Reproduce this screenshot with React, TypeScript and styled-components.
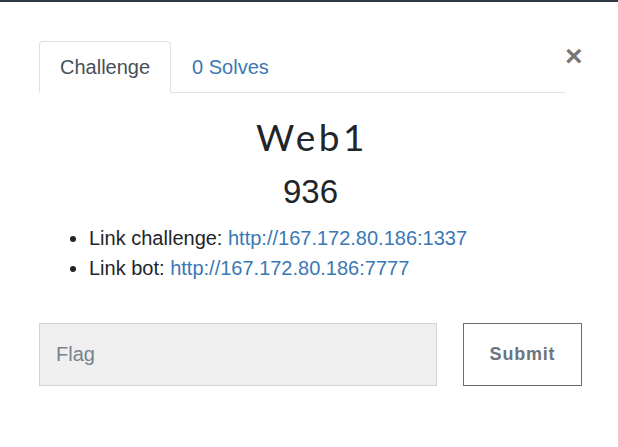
import React from "react";
import styled, { createGlobalStyle } from "styled-components";

const Global = createGlobalStyle`
  html, body { margin: 0; padding: 0; background: #fff; }
  body { font-family: "Liberation Sans", Arial, sans-serif; color: #212529; }
  * { box-sizing: border-box; }
`;

const TopBar = styled.div`
  height: 2px;
  background: #2f3a44;
`;

const Modal = styled.div`
  padding: 39px 36px 0 39px;
`;

const HeaderRow = styled.div`
  display: flex;
  justify-content: space-between;
  align-items: flex-start;
`;

const Tabs = styled.ul`
  display: flex;
  flex-shrink: 0;
  width: 526px;
  margin: 0;
  padding: 0;
  list-style: none;
  border-bottom: 1px solid #dee2e6;
`;

const Tab = styled.li<{ $active?: boolean }>`
  margin-bottom: -1px;
  padding: 10px 20px;
  font-size: 20px;
  line-height: 30px;
  border: 1px solid ${(p) => (p.$active ? "#dee2e6" : "transparent")};
  border-bottom-color: ${(p) => (p.$active ? "#fff" : "transparent")};
  border-radius: 4px 4px 0 0;
  background: ${(p) => (p.$active ? "#fff" : "transparent")};
  color: ${(p) => (p.$active ? "#495057" : "#3b78b3")};
`;

const Close = styled.button`
  border: 0;
  background: none;
  padding: 0;
  margin: 2px 1px 0 0;
  font-family: "Liberation Sans", Arial, sans-serif;
  font-size: 30px;
  font-weight: 700;
  line-height: 26px;
  color: #777;
`;

const Title = styled.h2`
  margin: 20px 0 0;
  padding-left: 3px;
  text-align: center;
  font-family: Lato, "Open Sans", sans-serif;
  font-weight: 400;
  font-size: 37px;
  letter-spacing: 3.5px;
  line-height: 48px;
  color: #212529;
`;

const Value = styled.h3`
  margin: 11px 0 0;
  text-align: center;
  font-weight: 400;
  font-size: 33px;
  line-height: 40px;
  color: #212529;
`;

const Links = styled.ul`
  margin: 11px 0 0;
  padding-left: 50px;
  font-size: 20px;
  line-height: 30px;
`;

const Link = styled.a`
  color: #3b78b3;
  text-decoration: none;
`;

const FormRow = styled.form`
  display: flex;
  gap: 26px;
  margin-top: 40px;
`;

const FlagInput = styled.input`
  width: 398px;
  height: 63px;
  padding: 0 16px;
  border: 1px solid #d4d4d4;
  background: #efefef;
  font-family: "Liberation Sans", Arial, sans-serif;
  font-size: 20px;
  color: #495057;
  outline: none;
  &::placeholder { color: #78828c; }
`;

const Submit = styled.button`
  width: 119px;
  height: 63px;
  border: 1px solid #6c6c6c;
  background: #fff;
  font-family: "Liberation Sans", Arial, sans-serif;
  font-size: 18px;
  font-weight: 700;
  letter-spacing: 0.8px;
  color: #6c757d;
`;

export default function App() {
  return (
    <>
      <Global />
      <TopBar />
      <Modal>
        <HeaderRow>
          <Tabs>
            <Tab $active>Challenge</Tab>
            <Tab>0 Solves</Tab>
          </Tabs>
          <Close aria-label="Close">×</Close>
        </HeaderRow>
        <Title>Web1</Title>
        <Value>936</Value>
        <Links>
          <li>
            Link challenge: <Link href="#">http://167.172.80.186:1337</Link>
          </li>
          <li>
            Link bot: <Link href="#">http://167.172.80.186:7777</Link>
          </li>
        </Links>
        <FormRow onSubmit={(e) => e.preventDefault()}>
          <FlagInput placeholder="Flag" />
          <Submit type="submit">Submit</Submit>
        </FormRow>
      </Modal>
    </>
  );
}
